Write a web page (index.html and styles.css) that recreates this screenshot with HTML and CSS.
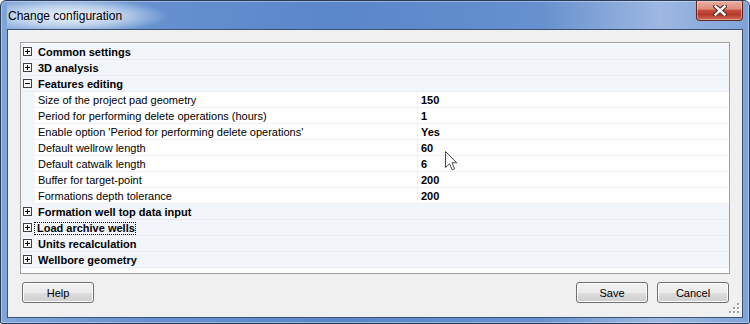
FILE: index.html
```html
<!doctype html>
<html lang="en">
<head>
    <meta charset="UTF-8">
    <link rel="stylesheet" href="styles.css">
    <title>Change configuration</title>
</head>
<body>
<div class="window">

    <div class="titlebar">
        <span class="title">Change configuration</span>
        <div class="close-btn">
            <svg width="14" height="11" viewBox="0 0 14 11">
                <path d="M2.5 1.5 L11.5 9.5 M11.5 1.5 L2.5 9.5" stroke="#5b2a24" stroke-width="4.6" stroke-linecap="square"/>
                <path d="M2.5 1.5 L11.5 9.5 M11.5 1.5 L2.5 9.5" stroke="#fff" stroke-width="2.4" stroke-linecap="square"/>
            </svg>
        </div>
    </div>

    <div class="client">
        <div class="grid">
            <div class="row cat"><span class="box plus"></span><span class="cat-label">Common settings</span></div>
            <div class="row cat"><span class="box plus"></span><span class="cat-label">3D analysis</span></div>
            <div class="row cat"><span class="box"></span><span class="cat-label">Features editing</span></div>

            <div class="row item"><span class="gutter"></span><span class="label">Size of the project pad geometry</span><span class="value">150</span></div>
            <div class="row item"><span class="gutter"></span><span class="label">Period for performing delete operations (hours)</span><span class="value">1</span></div>
            <div class="row item"><span class="gutter"></span><span class="label">Enable option 'Period for performing delete operations'</span><span class="value">Yes</span></div>
            <div class="row item"><span class="gutter"></span><span class="label">Default wellrow length</span><span class="value">60</span></div>
            <div class="row item"><span class="gutter"></span><span class="label">Default catwalk length</span><span class="value">6</span></div>
            <div class="row item"><span class="gutter"></span><span class="label">Buffer for target-point</span><span class="value">200</span></div>
            <div class="row item"><span class="gutter"></span><span class="label">Formations depth tolerance</span><span class="value">200</span></div>

            <div class="row cat"><span class="box plus"></span><span class="cat-label">Formation well top data input</span></div>
            <div class="row cat"><span class="box plus"></span><span class="cat-label focused">Load archive wells</span></div>
            <div class="row cat"><span class="box plus"></span><span class="cat-label">Units recalculation</span></div>
            <div class="row cat"><span class="box plus"></span><span class="cat-label">Wellbore geometry</span></div>
        </div>

        <div class="buttons">
            <button class="btn">Help</button>
            <button class="btn push">Save</button>
            <button class="btn">Cancel</button>
        </div>

        <svg class="grip" width="11" height="11" viewBox="0 0 11 11">
            <g fill="#fff">
                <rect x="9" y="1" width="2" height="2"/>
                <rect x="9" y="5" width="2" height="2"/><rect x="5" y="5" width="2" height="2"/>
                <rect x="9" y="9" width="2" height="2"/><rect x="5" y="9" width="2" height="2"/><rect x="1" y="9" width="2" height="2"/>
            </g>
            <g fill="#a0a0a0">
                <rect x="8" y="0" width="2" height="2"/>
                <rect x="8" y="4" width="2" height="2"/><rect x="4" y="4" width="2" height="2"/>
                <rect x="8" y="8" width="2" height="2"/><rect x="4" y="8" width="2" height="2"/><rect x="0" y="8" width="2" height="2"/>
            </g>
        </svg>
    </div>

    <svg class="pointer" width="13" height="20" viewBox="0 0 13 20">
        <path d="M0.5 0.5 L0.5 16.5 L4.5 12.8 L7.2 18.8 L9.6 17.8 L7 11.8 L11.8 11.8 Z" fill="#fff" stroke="#4a4a4a" stroke-width="1" stroke-linejoin="miter"/>
    </svg>

</div>
</body>
</html>
```

FILE: styles.css
```css
html, body {
    margin: 0;
    padding: 0;
}
body {
    width: 750px;
    height: 324px;
    overflow: hidden;
    font-family: "Liberation Sans", Arial, sans-serif;
    font-size: 11px;
    color: #000;
}

.window {
    position: relative;
    box-sizing: border-box;
    width: 750px;
    height: 324px;
    border: 1px solid #2c3d5a;
    border-radius: 6px 6px 2px 2px;
    padding: 0 6px 5px 6px;
    display: flex;
    flex-direction: column;
    background: linear-gradient(to right, #7fa5d9 0%, #6690cf 20%, #5a87ca 45%, #6690ce 72%, #9db8e1 88%, #7ea3d8 100%);
    box-shadow: inset 0 0 0 1px rgba(255, 255, 255, 0.35);
}

.titlebar {
    height: 28px;
    display: flex;
    align-items: flex-start;
    background: radial-gradient(ellipse 100px 18px at 62px 15px, rgba(240, 246, 253, 1), rgba(236, 243, 252, 0.6) 55%, rgba(236, 243, 252, 0) 100%);
}
.titlebar .title {
    margin-top: 7px;
    padding-left: 1px;
    font-size: 12px;
    line-height: 16px;
}
.close-btn {
    margin-left: auto;
    width: 45px;
    height: 19px;
    display: flex;
    align-items: center;
    justify-content: center;
    border: 1px solid #5e2720;
    border-top: none;
    border-radius: 0 0 4px 4px;
    background: linear-gradient(#eab0a2 0%, #df8b7b 42%, #c54c3c 50%, #b63a2b 72%, #d26c5a 100%);
    box-shadow: inset 0 0 0 1px rgba(255, 220, 210, 0.45);
}

.client {
    position: relative;
    flex: 1;
    display: flex;
    flex-direction: column;
    border: 1px solid #3b5272;
    background: #f0f0f0;
    padding: 12px 12px 0 12px;
}

.grid {
    box-sizing: border-box;
    height: 232px;
    padding-top: 1px;
    border: 1px solid #a0a0a0;
    background: #fbfcfe;
}
.row {
    display: flex;
    height: 16px;
    box-sizing: border-box;
}
.row.cat {
    align-items: flex-start;
    background: #f2f5fa;
    border-bottom: 1px solid #e9edf3;
}
.box {
    position: relative;
    box-sizing: border-box;
    width: 9px;
    height: 9px;
    margin: 3px 0 0 2px;
    border: 1px solid #404040;
    background: #fff;
}
.box::before {
    content: "";
    position: absolute;
    left: 1px;
    top: 3px;
    width: 5px;
    height: 1px;
    background: #000;
}
.box.plus::after {
    content: "";
    position: absolute;
    left: 3px;
    top: 1px;
    width: 1px;
    height: 5px;
    background: #000;
}
.cat-label {
    margin: 2px 0 0 6px;
    font-weight: bold;
    line-height: 13px;
}
.cat-label.focused {
    margin-left: 2px;
    padding: 0 1px 0 3px;
    outline: 1px dotted #000;
    outline-offset: -1px;
}

.row.item {
    background: #fff;
}
.gutter {
    width: 14px;
    background: #f2f5fa;
}
.label {
    box-sizing: border-box;
    width: 383px;
    padding: 2px 0 0 3px;
    line-height: 13px;
    border-right: 1px solid #f0f0f0;
    border-bottom: 1px solid #f0f0f0;
    white-space: nowrap;
    overflow: hidden;
}
.value {
    flex: 1;
    padding: 2px 0 0 3px;
    font-weight: bold;
    line-height: 13px;
    border-bottom: 1px solid #f0f0f0;
}

.buttons {
    display: flex;
    margin-top: 8px;
    padding: 0 1px 0 2px;
}
.btn {
    width: 72px;
    height: 21px;
    padding: 0;
    font-family: "Liberation Sans", Arial, sans-serif;
    font-size: 11px;
    color: #000;
    border: 1px solid #707070;
    border-radius: 3px;
    background: linear-gradient(#f2f2f2 0%, #ebebeb 50%, #dddddd 51%, #cfcfcf 100%);
    box-shadow: inset 0 0 0 1px #fbfbfb;
}
.btn.push {
    margin-left: auto;
    margin-right: 9px;
}

.grip {
    position: absolute;
    right: 2px;
    bottom: 3px;
}

.pointer {
    position: absolute;
    left: 444px;
    top: 150px;
}
```
